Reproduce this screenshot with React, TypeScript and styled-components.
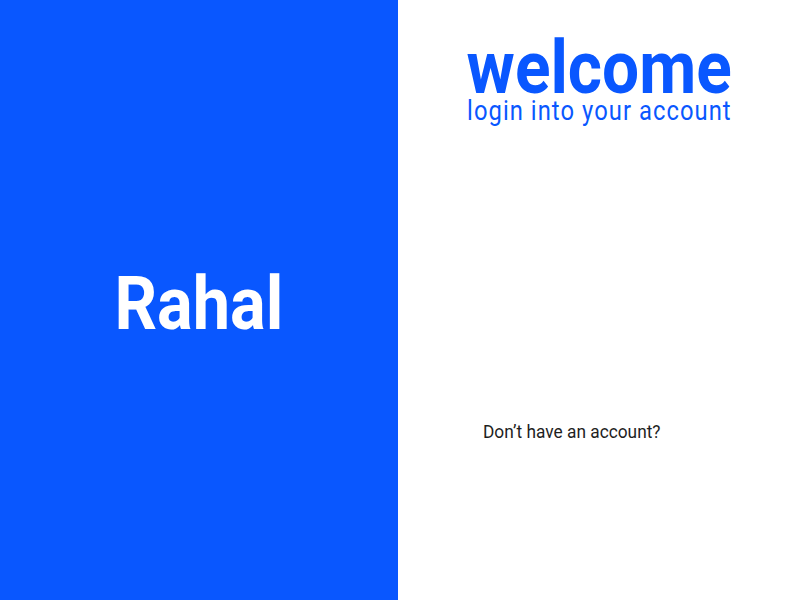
import React from "react";
import styled, { createGlobalStyle } from "styled-components";

const Global = createGlobalStyle`
  html, body { margin: 0; padding: 0; height: 100%; }
  body { font-family: Roboto, "Noto Sans", Arial, sans-serif; background: #fff; }
  #root { height: 100%; }
`;

const Page = styled.div`
  display: flex;
  width: 800px;
  height: 600px;
`;

const Brand = styled.aside`
  width: 398px;
  flex: none;
  background: #0957ff;
  display: flex;
  align-items: center;
  justify-content: center;
`;

const BrandName = styled.h1`
  display: inline-block;
  margin: 7px 0 0;
  color: #fff;
  font-family: Roboto, sans-serif;
  font-weight: 700;
  font-size: 74px;
  line-height: 74px;
  transform: scaleX(0.9);
`;

const Main = styled.main`
  flex: 1;
  display: flex;
  flex-direction: column;
`;

const Header = styled.header`
  display: flex;
  flex-direction: column;
  align-items: center;
  padding-top: 35px;
`;

const Title = styled.h2`
  display: inline-block;
  margin: 0;
  color: #0957ff;
  font-family: Roboto, sans-serif;
  font-weight: 700;
  font-size: 75px;
  line-height: 64px;
  transform: scaleX(0.877);
`;

const Subtitle = styled.p`
  display: inline-block;
  margin: 0;
  color: #0957ff;
  font-family: Roboto, sans-serif;
  font-weight: 400;
  font-size: 27px;
  line-height: 24px;
  letter-spacing: 1.2px;
  transform: scaleX(0.88);
`;

const Footer = styled.p`
  margin: 299px 0 0;
  padding-left: 85px;
  color: #1e1e1e;
  font-family: Roboto, sans-serif;
  font-size: 19px;
  line-height: 20px;
  transform: scaleX(0.91);
  transform-origin: 85px 50%;
`;

export default function App() {
  return (
    <>
      <Global />
      <Page>
        <Brand>
          <BrandName>Rahal</BrandName>
        </Brand>
        <Main>
          <Header>
            <Title>welcome</Title>
            <Subtitle>login into your account</Subtitle>
          </Header>
          <Footer>Don’t have an account?</Footer>
        </Main>
      </Page>
    </>
  );
}
